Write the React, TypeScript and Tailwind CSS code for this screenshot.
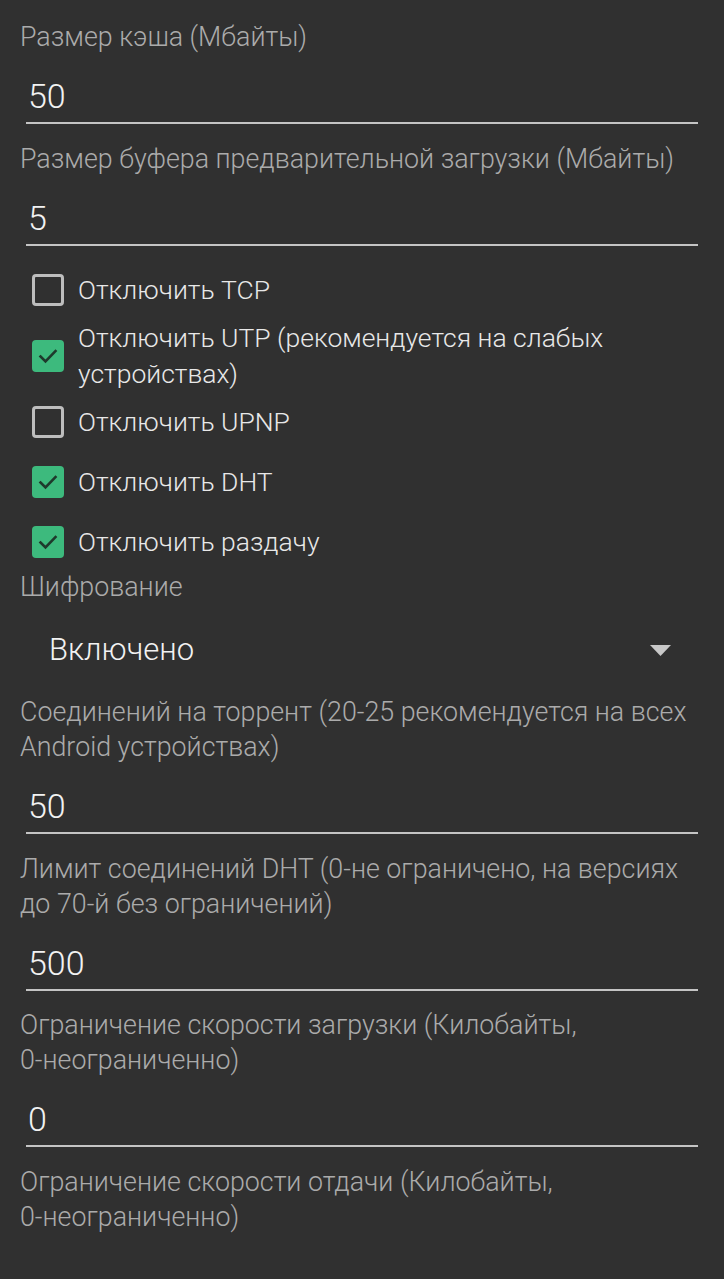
import React from "react";

const font = { fontFamily: "Roboto, 'Noto Sans', sans-serif" };

function Field({ label, value }: { label: React.ReactNode; value: string }) {
  return (
    <div className="flex flex-col pl-[20px] pr-[26px] mb-[17.5px]">
      <div className="text-[26.8px] leading-[35px] font-light text-[#ababab]">{label}</div>
      <div className="mt-[21px] ml-[6px] pl-[2px] h-[48px] pb-[6px] border-b-2 border-[#c4c4c4] text-[34px] leading-[40px] font-light text-[#f2f2f2]">
        {value}
      </div>
    </div>
  );
}

function Check({ label, checked }: { label: React.ReactNode; checked: boolean }) {
  return (
    <div className="flex items-center min-h-[60px] pl-[32px] pr-[20px]">
      {checked ? (
        <div className="w-[32px] h-[32px] rounded-[4px] bg-[#3dba7d] flex items-center justify-center shrink-0">
          <svg width="24" height="24" viewBox="0 0 24 24">
            <path d="M4.5 12.5 L9.5 17.5 L19.5 7" fill="none" stroke="#1e3a2c" strokeWidth="2.6" strokeLinecap="square" />
          </svg>
        </div>
      ) : (
        <div className="w-[32px] h-[32px] rounded-[4px] border-[3px] border-[#bdbdbd] shrink-0" />
      )}
      <div className="ml-[14px] text-[26.5px] leading-[36px] font-light text-[#e8e8e8]">{label}</div>
    </div>
  );
}

const Nb = ({ children }: { children: React.ReactNode }) => <span className="whitespace-nowrap">{children}</span>;

export default function App() {
  return (
    <div className="w-[724px] h-[1279px] overflow-hidden bg-[#303030] pt-[20px]" style={font}>
      <Field label="Размер кэша (Мбайты)" value="50" />
      <Field label="Размер буфера предварительной загрузки (Мбайты)" value="5" />
      <div className="flex flex-col -mt-[3px]">
        <Check label="Отключить TCP" checked={false} />
        <Check label="Отключить UTP (рекомендуется на слабых устройствах)" checked={true} />
        <Check label="Отключить UPNP" checked={false} />
        <Check label="Отключить DHT" checked={true} />
        <Check label="Отключить раздачу" checked={true} />
      </div>
      <div className="-mt-[2px] pl-[20px] text-[26.8px] leading-[35px] font-light text-[#ababab]">Шифрование</div>
      <div className="h-[90px] flex items-center justify-between pl-[49px] pr-[53px]">
        <span className="text-[31px] font-light text-[#f2f2f2]">Включено</span>
        <svg width="21" height="11" viewBox="0 0 21 11">
          <path d="M0 0 L21 0 L10.5 11 Z" fill="#c8c8c8" />
        </svg>
      </div>
      <Field label="Соединений на торрент (20-25 рекомендуется на всех Android устройствах)" value="50" />
      <Field label="Лимит соединений DHT (0-не ограничено, на версиях до 70-й без ограничений)" value="500" />
      <Field label={<>Ограничение скорости загрузки (Килобайты, <Nb>0-неограниченно)</Nb></>} value="0" />
      <div className="pl-[20px] pr-[26px] text-[26.8px] leading-[35px] font-light text-[#ababab]">
        Ограничение скорости отдачи (Килобайты, <Nb>0-неограниченно)</Nb>
      </div>
    </div>
  );
}
